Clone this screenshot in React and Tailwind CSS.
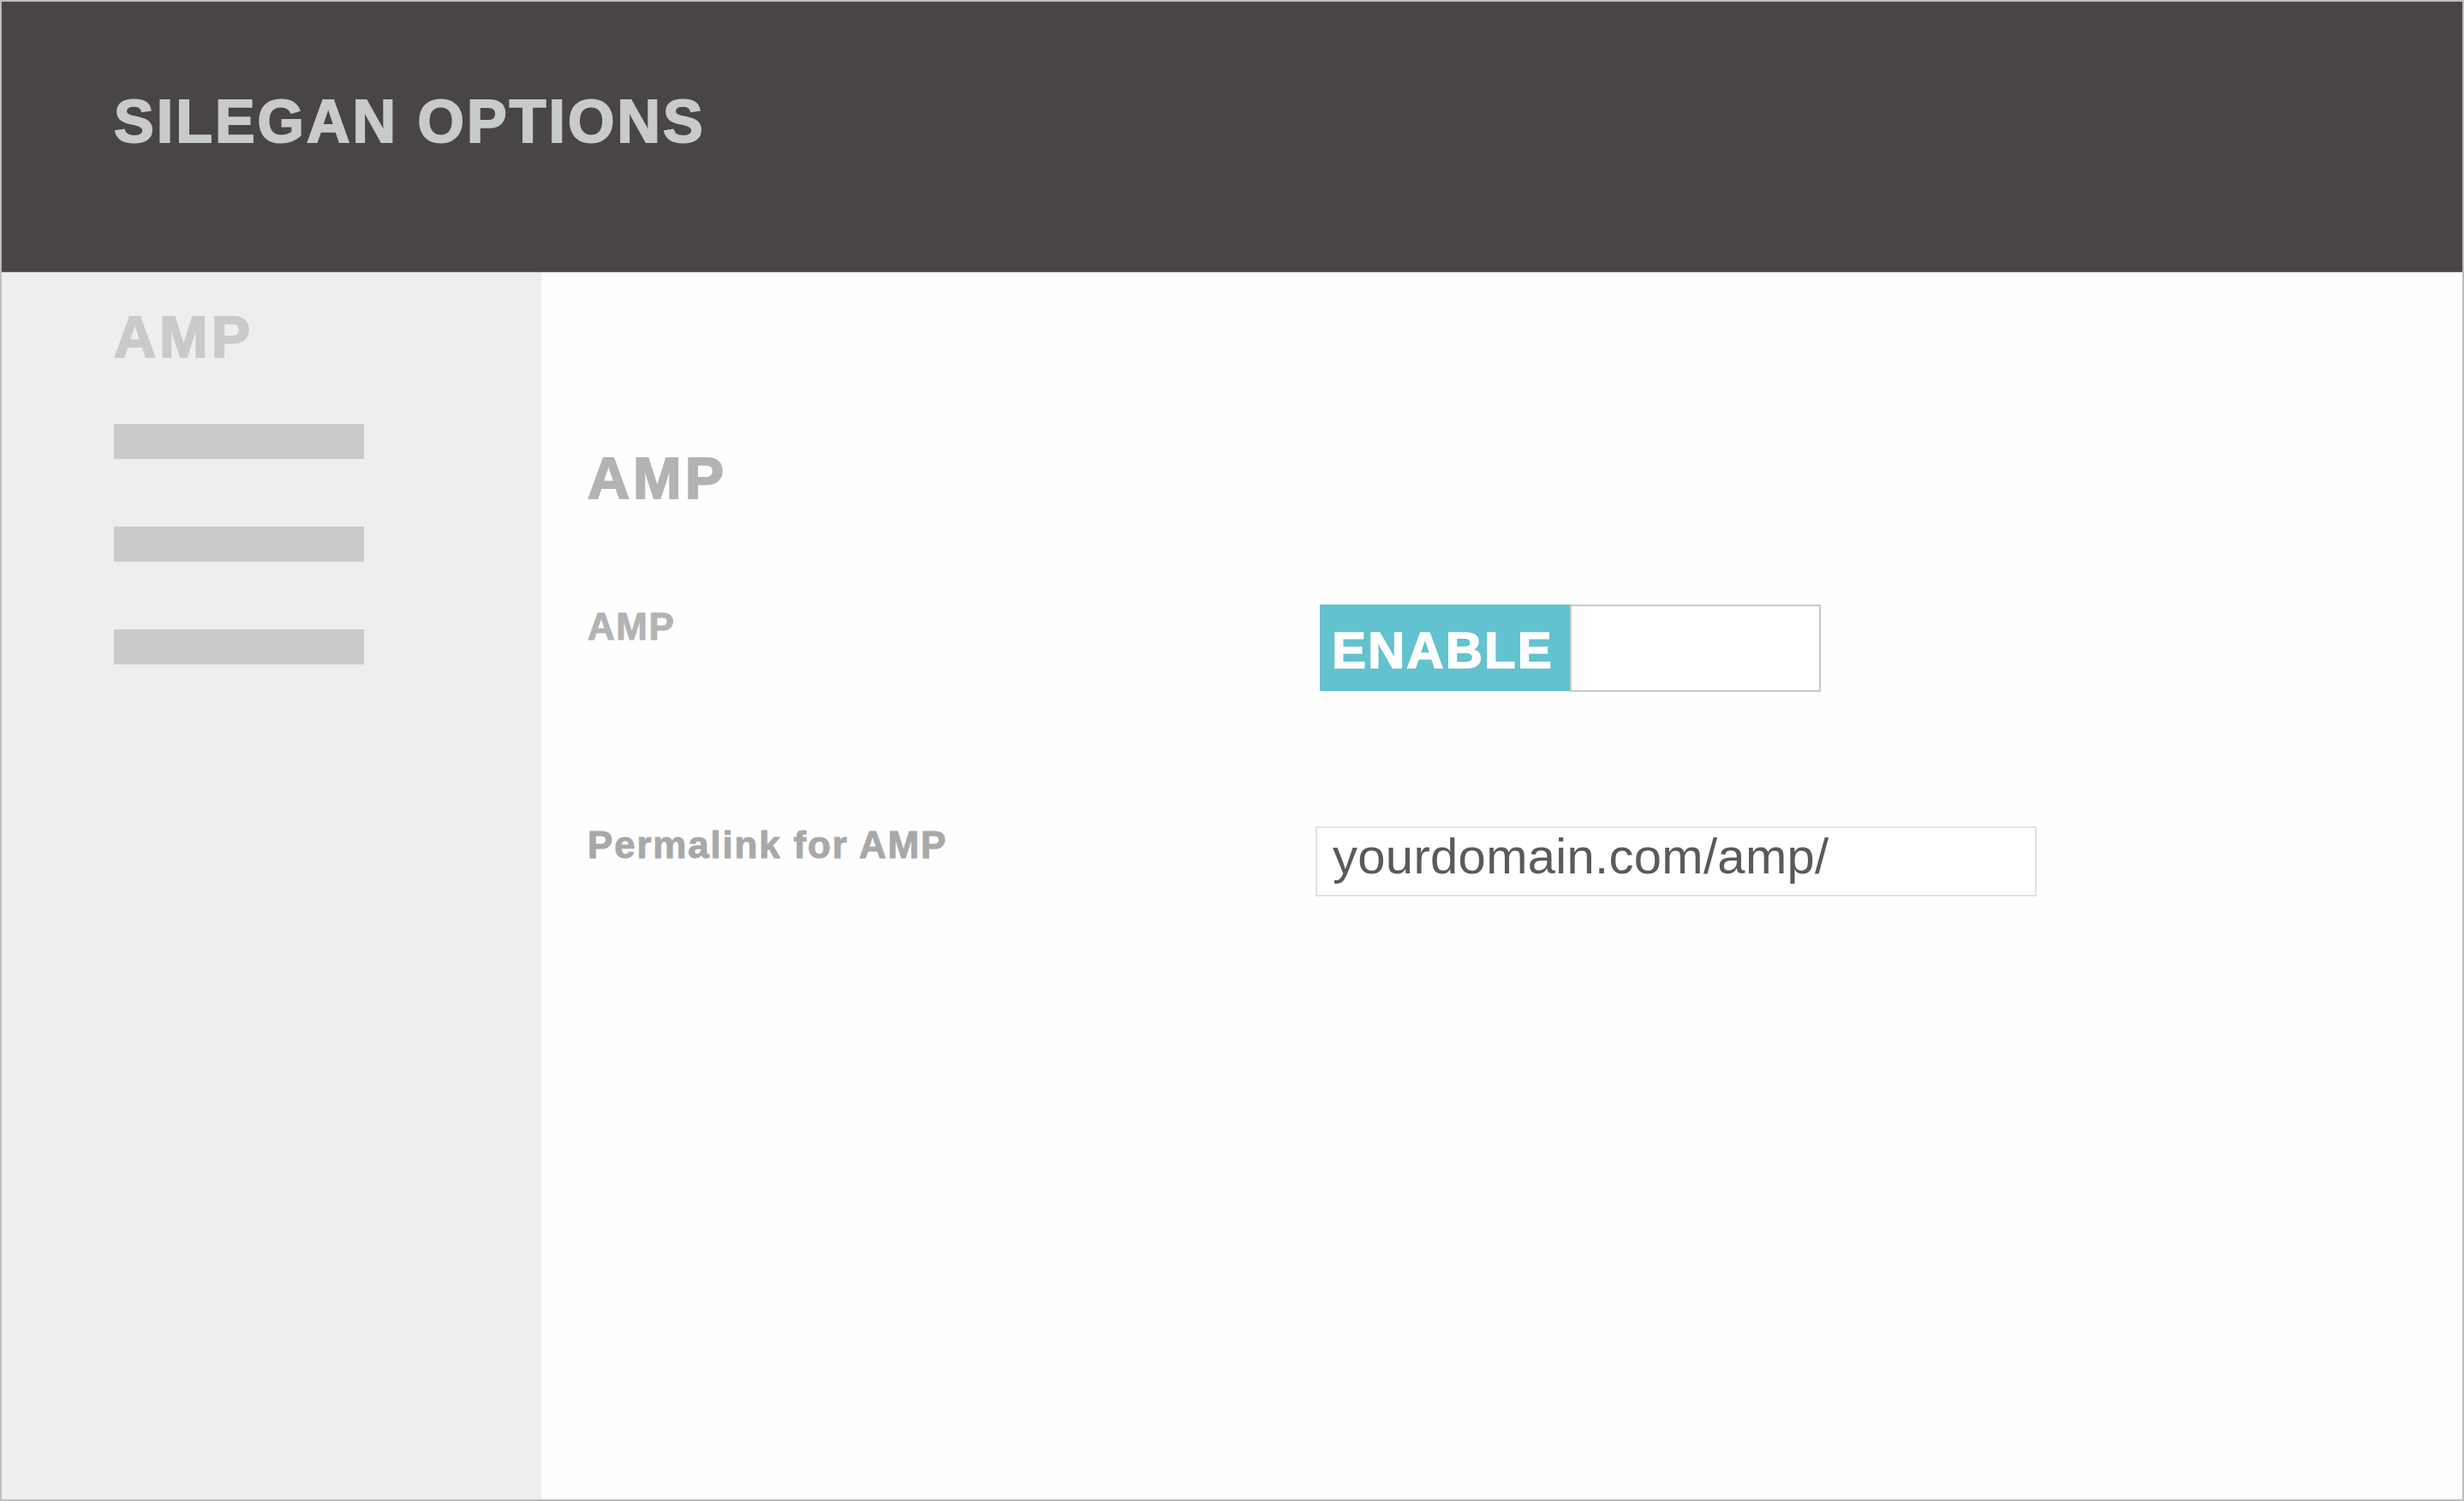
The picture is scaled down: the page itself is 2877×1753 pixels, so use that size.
export default function App() {
  const font = { fontFamily: '"Liberation Sans", Arial, sans-serif' };
  return (
    <div
      className="w-[2877px] h-[1753px] flex flex-col border-2 border-[#bdbdbd] bg-[#fefefe] box-border"
      style={font}
    >
      <header className="h-[316px] shrink-0 bg-[#494544] pl-[131px] pt-[105px] border-b border-[#6f6b6a]">
        <h1 className="text-[70px] leading-none font-bold text-[#c9cacb] tracking-[3px] [-webkit-text-stroke:2px_#c9cacb]">
          SILEGAN OPTIONS
        </h1>
      </header>
      <div className="flex flex-1 min-h-0">
        <aside className="w-[631px] shrink-0 bg-[#eeeeee] pl-[131px] pt-[41px] border-r-2 border-[#f3f3f3]">
          <div className="text-[68px] leading-none font-bold text-[#c9cacb] tracking-[4px] [-webkit-text-stroke:2px_#c9cacb]">AMP</div>
          <div className="mt-[68px] flex flex-col gap-[79px]">
            <div className="w-[292px] h-[41px] bg-[#c9cacb]" />
            <div className="w-[292px] h-[41px] bg-[#c9cacb]" />
            <div className="w-[292px] h-[41px] bg-[#c9cacb]" />
          </div>
        </aside>
        <main className="flex-1 pl-[53px] pt-[206px]">
          <h2 className="text-[68px] leading-none font-bold text-[#b3b3b3] tracking-[4px] [-webkit-text-stroke:2px_#b3b3b3]">AMP</h2>
          <div className="mt-[114px] flex items-start">
            <div className="w-[850px] pt-[4px] text-[44px] leading-none font-bold text-[#b3b3b3] tracking-[1.5px] [-webkit-text-stroke:1px_#b3b3b3]">
              AMP
            </div>
            <div className="ml-[5px] flex">
              <div className="w-[292px] h-[101px] bg-[#63c2cf] pl-[14px] pt-[24px] text-[60px] leading-none font-bold text-white tracking-[2px] [-webkit-text-stroke:1.5px_#ffffff]">
                ENABLE
              </div>
              <div className="w-[293px] h-[102px] border-2 border-[#c8c8c8] bg-white" />
            </div>
          </div>
          <div className="mt-[157px] flex items-start">
            <div className="w-[850px] text-[44px] leading-none font-bold text-[#a8a8a8] tracking-[1.8px] [-webkit-text-stroke:1px_#a8a8a8]">
              Permalink for AMP
            </div>
            <div className="w-[842px] h-[82px] border-2 border-[#e2e2e2] bg-white pl-[18px] pt-[4px] text-[58px] leading-none text-[#5a5a5a] tracking-[0.3px]">
              yourdomain.com/amp/
            </div>
          </div>
        </main>
      </div>
    </div>
  );
}
